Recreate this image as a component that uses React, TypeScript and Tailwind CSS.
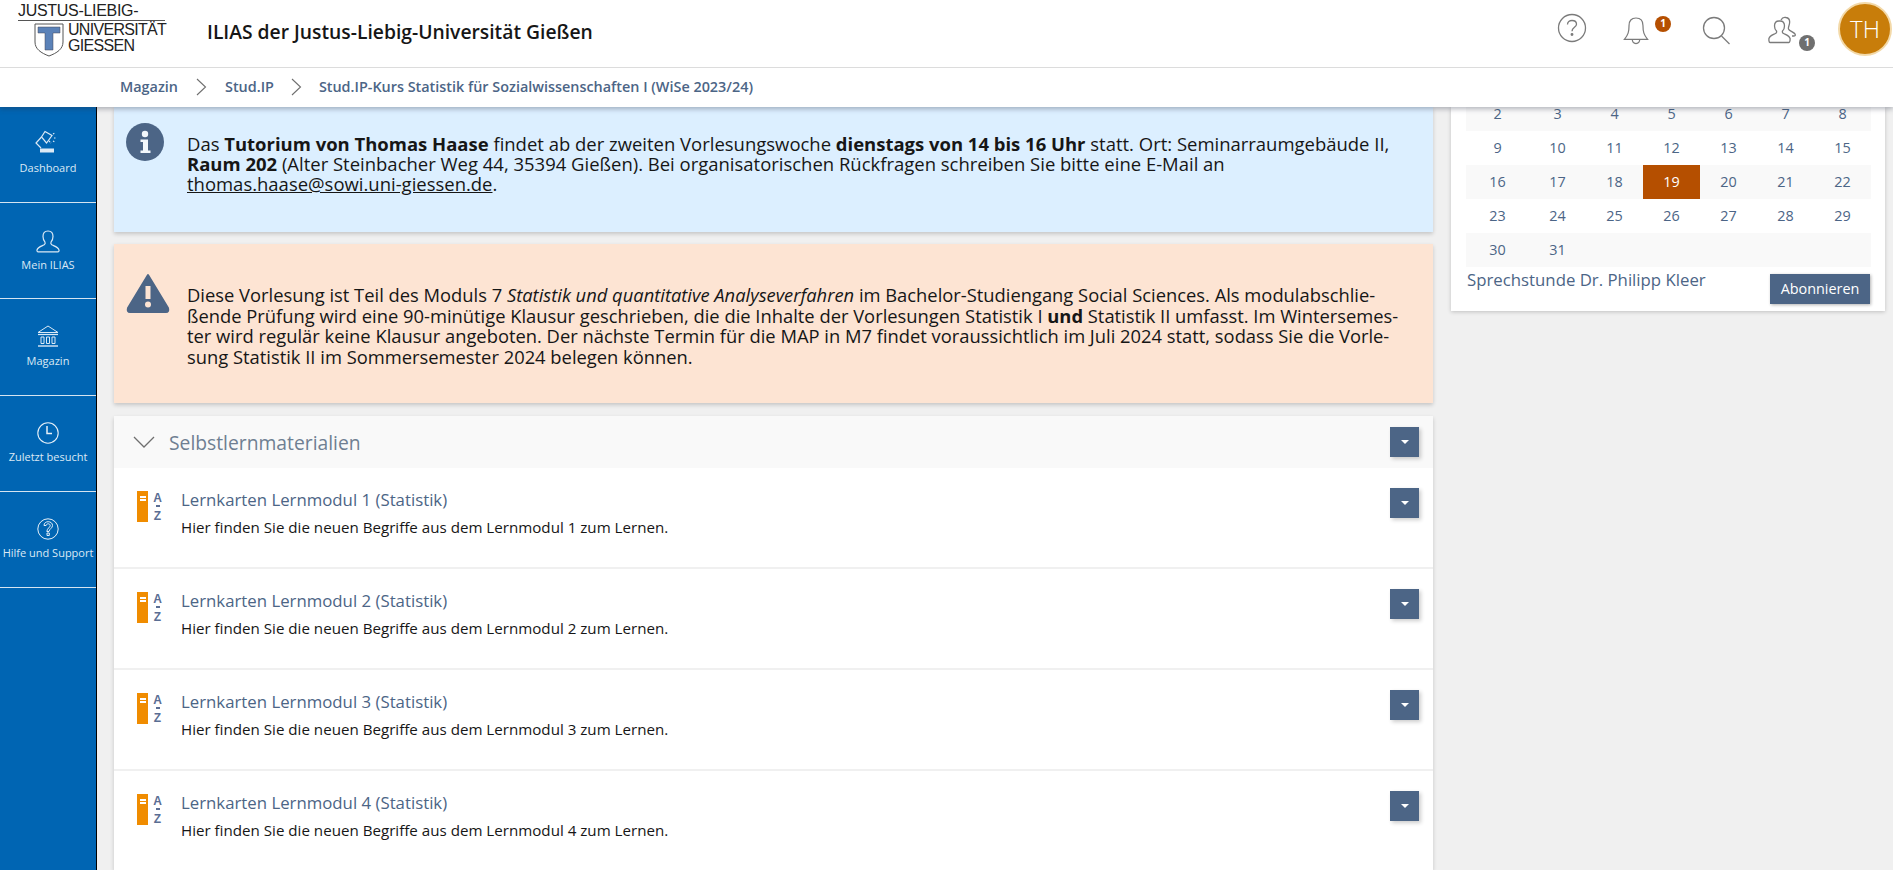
import React from "react";

const Caret = () => (
  <button className="flex h-[30px] w-[29px] items-center justify-center bg-[#4c6586] shadow-[2px_2px_4px_rgba(0,0,0,0.2)]">
    <span className="block h-0 w-0 border-x-[4px] border-t-[4px] border-x-transparent border-t-white" />
  </button>
);

const Chevron = () => (
  <svg width="11" height="20" viewBox="0 0 11 20" fill="none" stroke="#6f6f6f" strokeWidth="1.1">
    <path d="M1 2l8.500 8L1 18" />
  </svg>
);

const Lamp = () => (
  <svg width="28" height="26" viewBox="0 0 28 26" fill="none" stroke="#dbe9f5" strokeWidth="1.2">
    <path d="M11 1.500l7 4-5.500 7.500-5-6z" />
    <path d="M7.500 7L2 13l5 5" />
    <path d="M15 11l2 2M20 8h2M19 4l2-1M19 11l2 1" strokeDasharray="1.5 1" />
    <rect x="6" y="18.500" width="14" height="4" fill="#dbe9f5" stroke="none" />
  </svg>
);
const Person = () => (
  <svg width="24" height="24" viewBox="0 0 24 24" fill="none" stroke="#dbe9f5" strokeWidth="1.2">
    <path d="M12 1c-3.600 0-5 2.700-5 5.600 0 2.400 1 4.400 2 5.600.4.900 0 2-.8 2.600-1.600 1-6.500 2-7.200 5.200-.2 1 .2 1.900 1.200 1.900h19.600c1 0 1.400-.9 1.200-1.900-.7-3.200-5.600-4.200-7.200-5.200-.8-.6-1.200-1.700-.8-2.600 1-1.200 2-3.200 2-5.600C17 3.700 15.600 1 12 1z" />
  </svg>
);
const Bank = () => (
  <svg width="22" height="22" viewBox="0 0 22 22" fill="none" stroke="#dbe9f5" strokeWidth="1">
    <path d="M1 7.500L11 1l10 6.500z" />
    <path d="M1 9.500h20" strokeWidth="1.200" />
    <path d="M4 12h3v6.500H4zM9.500 12h3v6.500h-3zM15 12h3v6.500h-3z" />
    <path d="M1 21h20" strokeWidth="1.400" />
  </svg>
);
const Clock = () => (
  <svg width="22" height="22" viewBox="0 0 22 22" fill="none" stroke="#e6f0f8" strokeWidth="1.1">
    <circle cx="11" cy="11" r="10.200" />
    <path d="M10 4v7.500h5" strokeWidth="1.500" />
  </svg>
);
const HelpSide = () => (
  <svg width="22" height="22" viewBox="0 0 22 22" fill="none" stroke="#e6f0f8" strokeWidth="1">
    <circle cx="11" cy="11" r="10.200" />
    <path d="M7 7.500C7 5 9 3.700 11.200 3.700c2.400 0 4.300 1.500 4.300 3.800 0 2.800-3 3-3.500 6h-2.200c.3-3.500 3.400-3.900 3.400-6 0-1-.9-1.700-2-1.700-1.200 0-2 .8-2.100 1.700zM10 15h2.300v2.500H10z" />
  </svg>
);

const SideItem = ({ icon, label, box, gap }: { icon: React.ReactNode; label: string; box: string; gap: string }) => (
  <div className={`flex flex-col items-center border-b border-[#d5e4f1] ${box}`}>
    <div className="flex h-[24px] items-center">{icon}</div>
    <div className={`whitespace-nowrap text-[11px] leading-[16px] text-[#dbe9f5] ${gap}`}>{label}</div>
  </div>
);

const CardIcon = () => (
  <div className="flex h-[32px] w-[25px] shrink-0 justify-between">
    <div className="flex h-[31px] w-[11px] flex-col items-center gap-[1px] bg-[#f08c00] pt-[5px]">
      <span className="block h-[2px] w-[6px] bg-white" />
      <span className="block h-[2px] w-[6px] bg-white" />
    </div>
    <div className="flex w-[9px] flex-col items-center font-['Liberation_Sans',sans-serif] text-[12px] font-bold leading-[14px] text-[#5a6d93]">
      <span>A</span>
      <span className="block h-[2px] w-[4px] bg-[#5a6d93]" />
      <span className="mt-[2px]">Z</span>
    </div>
  </div>
);

const Row = ({ n }: { n: number }) => (
  <div className="mb-[2px] flex h-[99px] bg-white pl-[23px] pr-[14px]">
    <div className="pt-[23px]">
      <CardIcon />
    </div>
    <div className="ml-[19px] flex-1 pt-[20px]">
      <div className="text-[16.800px] leading-[24px] text-[#4c6586]">Lernkarten Lernmodul {n} (Statistik)</div>
      <div className="mt-[5px] text-[15.150px] leading-[20px] text-[#161616]">
        Hier finden Sie die neuen Begriffe aus dem Lernmodul {n} zum Lernen.
      </div>
    </div>
    <div className="pt-[20px]">
      <Caret />
    </div>
  </div>
);

const weeks: string[][] = [
  ["2", "3", "4", "5", "6", "7", "8"],
  ["9", "10", "11", "12", "13", "14", "15"],
  ["16", "17", "18", "19", "20", "21", "22"],
  ["23", "24", "25", "26", "27", "28", "29"],
  ["30", "31", "", "", "", "", ""],
];

export default function App() {
  return (
    <div className="flex h-[870px] w-[1893px] flex-col overflow-hidden bg-[#f0f0f0] font-['Open_Sans',sans-serif]">
      <header className="relative z-20 shadow-[0_2px_5px_rgba(40,50,70,0.35)]">
        <div className="flex h-[68px] items-center border-b border-[#dcdcdc] bg-white pl-[18px]">
          <div className="-mt-[7px] w-[189px] shrink-0 font-['Liberation_Sans',sans-serif] text-[#222]">
            <div className="w-[147px] whitespace-nowrap border-b border-[#555] pb-[2px] text-[16px] leading-[15px] tracking-[-0.3px]">
              JUSTUS-LIEBIG-
            </div>
            <div className="mt-[2px] flex">
              <svg className="ml-[16px]" width="30" height="34" viewBox="0 0 30 34">
                <path d="M1 1h28v18c0 7-6 11-14 14C7 30 1 26 1 19z" fill="#fff" stroke="#555" strokeWidth="1" />
                <path d="M4 4h22v6h-7v17h-8V10H4z" fill="#5b82b8" stroke="#445" strokeWidth=".5" />
              </svg>
              <div className="-mt-[1px] ml-[4px] text-[16px] leading-[16px] tracking-[-0.7px]">
                <div>UNIVERSITÄT</div>
                <div>GIESSEN</div>
              </div>
            </div>
          </div>
          <div className="-mt-[3px] text-[19.300px] font-semibold text-[#161616]">ILIAS der Justus-Liebig-Universität Gießen</div>
          <div className="relative ml-auto h-[68px] w-[340px]">
            <svg className="absolute left-[4px] top-[13px]" width="30" height="30" viewBox="0 0 30 30" fill="none" stroke="#7b7b7b" strokeWidth="1.300">
              <circle cx="15" cy="15" r="13.500" />
              <path d="M10.500 11.500c0-2.500 2-4 4.500-4s4.500 1.500 4.500 3.700c0 3-4.500 3.300-4.500 7" />
              <circle cx="15" cy="21.500" r=".8" fill="#7b7b7b" />
            </svg>
            <svg className="absolute left-[70px] top-[16px]" width="26" height="30" viewBox="0 0 28 31" fill="none" stroke="#7b7b7b" strokeWidth="1.300">
              <path d="M14 1.500c-5 0-7.500 3.500-7.500 8 0 7-1 10-5 15h25c-4-5-5-8-5-15 0-4.500-2.500-8-7.500-8zM10 24.500c0 3 2 4.500 4 4.500s4-1.500 4-4.500" />
            </svg>
            <span className="absolute left-[102px] top-[16px] flex h-[16px] w-[16px] items-center justify-center rounded-full bg-[#b54f00] text-[10px] font-bold text-white">1</span>
            <svg className="absolute left-[149px] top-[16px]" width="29" height="30" viewBox="0 0 29 30" fill="none" stroke="#7b7b7b" strokeWidth="1.300">
              <circle cx="12" cy="12" r="10.500" />
              <path d="M19.500 20l8 8" />
            </svg>
            <svg className="absolute left-[215px] top-[16px]" width="30" height="29" viewBox="0 0 30 29" fill="none" stroke="#7b7b7b" strokeWidth="1.300">
              <path d="M11 5c-3 0-4.500 2.300-4.500 5 0 2.200 1 4 2 5 .3 1 0 2-1 2.500-2 1-6 2-6.500 5-.2 1-.2 4 1 4h19c1 0 1.200-3 1-4-.5-3-4.500-4-6.500-5-1-.5-1.300-1.500-1-2.500 1-1 2-2.800 2-5 0-2.700-1.500-5-4.500-5z" />
              <path d="M13 4c1-2 3-3 5-2.500 3 .5 4 3 3.500 6-.3 2-1.500 4-1 5.500.7 2 5 3 6.500 5 .6 1 .5 2-1 2h-2" />
            </svg>
            <span className="absolute left-[246px] top-[35px] flex h-[16px] w-[16px] items-center justify-center rounded-full bg-[#6f6f6f] text-[10px] font-bold text-white">1</span>
            <div className="absolute left-[285px] top-[2px] flex h-[54px] w-[54px] items-center justify-center rounded-full border-2 border-[#f3d9a8] bg-[#c87d0a] text-[24px] font-light text-white">
              TH
            </div>
          </div>
        </div>
        <div className="flex h-[39px] items-center bg-white pb-[2px] pl-[120px] text-[14.400px] font-semibold text-[#4c6586]">
          <span>Magazin</span>
          <span className="mx-[18px] flex"><Chevron /></span>
          <span>Stud.IP</span>
          <span className="ml-[17px] mr-[17px] flex"><Chevron /></span>
          <span>Stud.IP-Kurs Statistik für Sozialwissenschaften I (WiSe 2023/24)</span>
        </div>
      </header>

      <div className="flex min-h-0 flex-1">
        <aside className="h-full w-[97px] shrink-0 border-r border-black bg-[#0065b3]">
          <SideItem icon={<Lamp />} label="Dashboard" box="h-[96px] pt-[24px]" gap="mt-[5px]" />
          <SideItem icon={<Person />} label="Mein ILIAS" box="h-[96px] pt-[27px]" gap="mt-[3px]" />
          <SideItem icon={<Bank />} label="Magazin" box="h-[97px] pt-[25px]" gap="mt-[5px]" />
          <SideItem icon={<Clock />} label="Zuletzt besucht" box="h-[96px] pt-[25px]" gap="mt-[4px]" />
          <SideItem icon={<HelpSide />} label="Hilfe und Support" box="h-[96px] pt-[25px]" gap="mt-[4px]" />
        </aside>

        <main className="ml-[17px] w-[1319px] shrink-0">
          <section className="flex h-[125px] bg-[#dcefff] pl-[12px] text-[18.480px] leading-[20px] text-[#161616] shadow-[0_2px_4px_rgba(0,0,0,0.18)]">
            <div className="pt-[16px]">
              <svg width="38" height="38" viewBox="0 0 38 38">
                <circle cx="19" cy="19" r="19" fill="#4c6586" />
                <circle cx="19" cy="11" r="3.200" fill="#f2f7fb" />
                <path d="M14.500 16.500h7.500v11h2.500V30h-10v-2.500H17v-8.500h-2.500z" fill="#f2f7fb" />
              </svg>
            </div>
            <div className="ml-[23px] whitespace-nowrap pt-[27px]">
              Das <b>Tutorium von Thomas Haase</b> findet ab der zweiten Vorlesungswoche <b>dienstags von 14 bis 16 Uhr</b> statt. Ort: Seminarraumgebäude II,
              <br />
              <b>Raum 202</b> (Alter Steinbacher Weg 44, 35394 Gießen). Bei organisatorischen Rückfragen schreiben Sie bitte eine E-Mail an
              <br />
              <span className="underline">thomas.haase@sowi.uni-giessen.de</span>.
            </div>
          </section>

          <section className="mt-[12px] flex h-[159px] bg-[#fde4d3] pl-[12px] text-[18.350px] leading-[20.600px] text-[#161616] shadow-[0_2px_4px_rgba(0,0,0,0.18)]">
            <div className="pt-[29px]">
              <svg width="44" height="40" viewBox="0 0 44 40">
                <path d="M22 2 L42 35 Q43 39 40 39 H4 Q1 39 2 35 Z" fill="#4c6586" stroke="#4c6586" strokeWidth="2" strokeLinejoin="round" />
                <path d="M19.500 13h5v13h-5z" fill="#fde4d3" />
                <circle cx="22" cy="31.500" r="3" fill="#fde4d3" />
              </svg>
            </div>
            <div className="ml-[17px] whitespace-nowrap pt-[41px]">
              Diese Vorlesung ist Teil des Moduls 7 <i>Statistik und quantitative Analyseverfahren</i> im Bachelor-Studiengang Social Sciences. Als modulabschlie-
              <br />
              ßende Prüfung wird eine 90-minütige Klausur geschrieben, die die Inhalte der Vorlesungen Statistik I <b>und</b> Statistik II umfasst. Im Wintersemes-
              <br />
              ter wird regulär keine Klausur angeboten. Der nächste Termin für die MAP in M7 findet voraussichtlich im Juli 2024 statt, sodass Sie die Vorle-
              <br />
              sung Statistik II im Sommersemester 2024 belegen können.
            </div>
          </section>

          <section className="mt-[13px] shadow-[0_2px_4px_rgba(0,0,0,0.18)]">
            <div className="flex h-[52px] items-center bg-[#f9f9f9] pl-[19px] pr-[14px]">
              <svg width="22" height="13" viewBox="0 0 22 13" fill="none" stroke="#6f6f6f" strokeWidth="1.300">
                <path d="M1 1l10 10L21 1" />
              </svg>
              <div className="ml-[14px] flex-1 pt-[2px] text-[19.300px] text-[#6f7f92]">Selbstlernmaterialien</div>
              <Caret />
            </div>
            <Row n={1} />
            <Row n={2} />
            <Row n={3} />
            <Row n={4} />
          </section>
        </main>

        <aside className="ml-[18px] h-[204px] w-[434px] shrink-0 overflow-hidden bg-white px-[15px] shadow-[0_1px_4px_rgba(0,0,0,0.2)]">
          <div className="-mt-[10px] grid grid-cols-[63px_repeat(6,57px)] text-center text-[14.400px] leading-[34px] text-[#4c6586]">
            {weeks.map((w, i) =>
              w.map((d, j) => (
                <div
                  key={`${i}-${j}`}
                  className={
                    d === "19"
                      ? "h-[34px] bg-[#b54f00] text-white"
                      : i % 2 === 0
                        ? "h-[34px] bg-[#f9f9f9]"
                        : "h-[34px] bg-white"
                  }
                >
                  {d}
                </div>
              )),
            )}
          </div>
          <div className="mt-[7px] flex items-start justify-between">
            <div className="pl-[1px] text-[16.800px] leading-[13px] text-[#4c6586]">
              <span className="relative -top-[1px]">Sprechstunde Dr. Philipp Kleer</span>
            </div>
            <button className="h-[30px] w-[100px] bg-[#4c6586] text-[14.400px] text-white shadow-[1px_1px_3px_rgba(0,0,0,0.3)]">Abonnieren</button>
          </div>
        </aside>
      </div>
    </div>
  );
}
